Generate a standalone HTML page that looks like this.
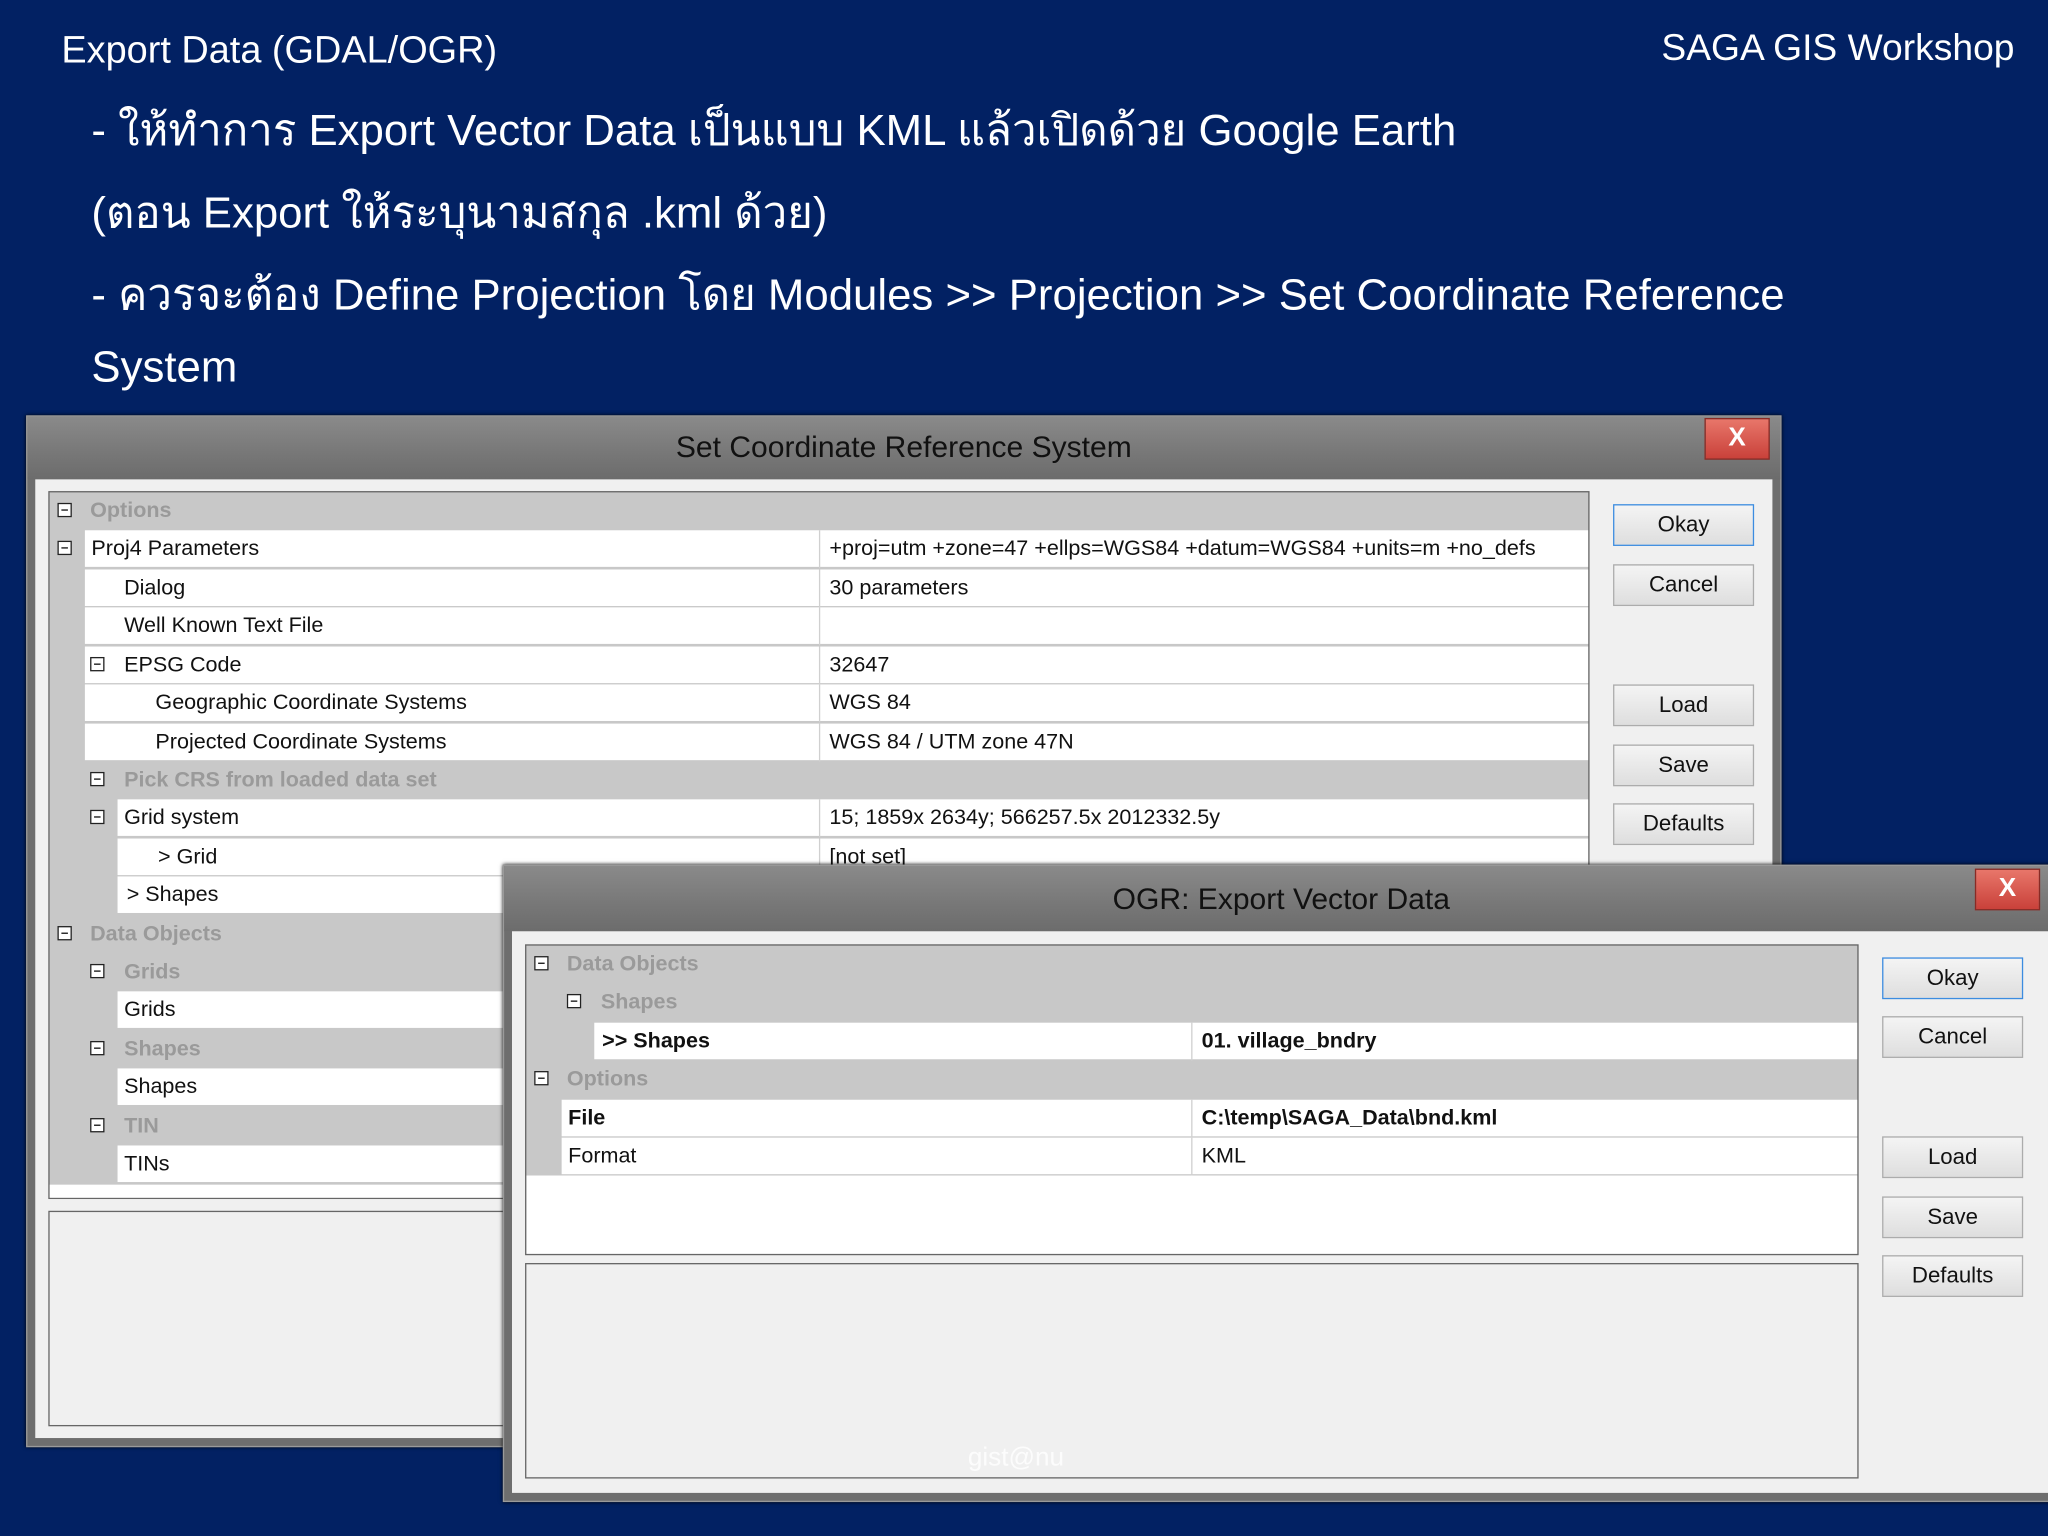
<!DOCTYPE html>
<html><head><meta charset="utf-8">
<style>
html,body{margin:0;padding:0;width:2048px;height:1536px;overflow:hidden;background:#022163;}
#s{position:absolute;left:0;top:0;width:1568px;height:1176px;transform:scale(1.306122);transform-origin:0 0;background:#022163;font-family:"Liberation Sans","Noto Sans CJK SC",sans-serif;}
.a{position:absolute;}
.t{color:#fff;white-space:nowrap;}
.dlg{position:absolute;background:#6e6e6e;border:1px solid #9a9a9a;box-shadow:0 0 3px #000;}
.tb{position:absolute;left:0;right:0;top:0;background:linear-gradient(#8a8a8a,#777 60%,#6c6c6c);color:#111;text-align:center;font-size:23px;}
.body{position:absolute;background:#f0f0f0;}
.x{position:absolute;width:48px;height:30px;background:linear-gradient(#e8766a,#c9413a);border:1px solid #8a2a24;color:#fff;font-weight:bold;font-size:20px;text-align:center;line-height:28px;}
.grid{position:absolute;background:#c8c8c8;border:1px solid #666;overflow:hidden;}
.r{position:absolute;left:0;right:0;height:29px;font-size:16.5px;color:#111;white-space:nowrap;}
.w{position:absolute;top:0;bottom:1px;right:0;background:#fff;}
.sep{position:absolute;top:0;bottom:0;width:1px;background:#d0d0d0;}
.r span{position:absolute;top:5px;}
.h span{color:#9a9a9a;font-weight:bold;}
.m{position:absolute;top:8px;width:11px;height:11px;border:1px solid #222;box-sizing:border-box;background:#fff;}
.m:after{content:"";position:absolute;left:2px;right:2px;top:4px;height:1px;background:#111;}
.btn{position:absolute;width:108px;height:32px;background:linear-gradient(#f4f4f4,#dedede);border:1px solid #acacac;box-sizing:border-box;font-size:17px;text-align:center;line-height:30px;color:#111;}
.btn.def{border:1px solid #3c8ce0;}
.box{position:absolute;background:#f0f0f0;border:1px solid #666;}
</style></head><body><div id="s">

<div class="a t" style="left:47px;top:23px;font-size:29px;">Export Data (GDAL/OGR)</div>
<div class="a t" style="left:1272px;top:21px;font-size:28.5px;">SAGA GIS Workshop</div>
<div class="a t" style="left:70px;top:73px;font-size:33.5px;">- ให้ทำการ Export Vector Data เป็นแบบ KML แล้วเปิดด้วย Google Earth</div>
<div class="a t" style="left:70px;top:136px;font-size:33.5px;">(ตอน Export ให้ระบุนามสกุล .kml ด้วย)</div>
<div class="a t" style="left:70px;top:199px;font-size:33.5px;">- ควรจะต้อง Define Projection โดย Modules &gt;&gt; Projection &gt;&gt; Set Coordinate Reference</div>
<div class="a t" style="left:70px;top:263px;font-size:33.5px;">System</div>

<!-- Dialog 1 -->
<div class="dlg" style="left:20px;top:318px;width:1342px;height:788px;">
 <div class="tb" style="height:48px;line-height:46px;">Set Coordinate Reference System</div>
 <div class="x" style="left:1284px;top:1px;">X</div>
 <div class="body" style="left:6px;top:48px;width:1330px;height:734px;"></div>
 <div class="grid" style="left:16px;top:57px;width:1178px;height:540px;">
  <div class="r h" style="top:0"><div class="m" style="left:6px"></div><span style="left:31px">Options</span></div>
  <div class="r" style="top:29px"><div class="w" style="left:27px"></div><div class="sep" style="left:589px"></div><div class="m" style="left:6px"></div><span style="left:32px">Proj4 Parameters</span><span style="left:597px">+proj=utm +zone=47 +ellps=WGS84 +datum=WGS84 +units=m +no_defs</span></div>
  <div class="r" style="top:59px"><div class="w" style="left:27px"></div><div class="sep" style="left:589px"></div><span style="left:57px">Dialog</span><span style="left:597px">30 parameters</span></div>
  <div class="r" style="top:88px"><div class="w" style="left:27px"></div><div class="sep" style="left:589px"></div><span style="left:57px">Well Known Text File</span></div>
  <div class="r" style="top:118px"><div class="w" style="left:27px"></div><div class="sep" style="left:589px"></div><div class="m" style="left:31px"></div><span style="left:57px">EPSG Code</span><span style="left:597px">32647</span></div>
  <div class="r" style="top:147px"><div class="w" style="left:27px"></div><div class="sep" style="left:589px"></div><span style="left:81px">Geographic Coordinate Systems</span><span style="left:597px">WGS 84</span></div>
  <div class="r" style="top:177px"><div class="w" style="left:27px"></div><div class="sep" style="left:589px"></div><span style="left:81px">Projected Coordinate Systems</span><span style="left:597px">WGS 84 / UTM zone 47N</span></div>
  <div class="r h" style="top:206px"><div class="m" style="left:31px"></div><span style="left:57px">Pick CRS from loaded data set</span></div>
  <div class="r" style="top:235px"><div class="w" style="left:52px"></div><div class="sep" style="left:589px"></div><div class="m" style="left:31px"></div><span style="left:57px">Grid system</span><span style="left:597px">15; 1859x 2634y; 566257.5x 2012332.5y</span></div>
  <div class="r" style="top:265px"><div class="w" style="left:52px"></div><div class="sep" style="left:589px"></div><span style="left:83px">&gt; Grid</span><span style="left:597px">[not set]</span></div>
  <div class="r" style="top:294px"><div class="w" style="left:52px"></div><div class="sep" style="left:589px"></div><span style="left:59px">&gt; Shapes</span></div>
  <div class="r h" style="top:324px"><div class="m" style="left:6px"></div><span style="left:31px">Data Objects</span></div>
  <div class="r h" style="top:353px"><div class="m" style="left:31px"></div><span style="left:57px">Grids</span></div>
  <div class="r" style="top:382px"><div class="w" style="left:52px"></div><span style="left:57px">Grids</span></div>
  <div class="r h" style="top:412px"><div class="m" style="left:31px"></div><span style="left:57px">Shapes</span></div>
  <div class="r" style="top:441px"><div class="w" style="left:52px"></div><span style="left:57px">Shapes</span></div>
  <div class="r h" style="top:471px"><div class="m" style="left:31px"></div><span style="left:57px">TIN</span></div>
  <div class="r" style="top:500px"><div class="w" style="left:52px"></div><span style="left:57px">TINs</span></div>
  <div class="a" style="left:0;right:0;top:530px;height:12px;background:#fff"></div>
 </div>
 <div class="box" style="left:16px;top:608px;width:1178px;height:163px;"></div>
 <div class="btn def" style="left:1214px;top:67px;">Okay</div>
 <div class="btn" style="left:1214px;top:113px;">Cancel</div>
 <div class="btn" style="left:1214px;top:205px;">Load</div>
 <div class="btn" style="left:1214px;top:251px;">Save</div>
 <div class="btn" style="left:1214px;top:296px;">Defaults</div>
</div>

<!-- Dialog 2 -->
<div class="dlg" style="left:385px;top:662px;width:1190px;height:486px;">
 <div class="tb" style="height:50px;line-height:50px;">OGR: Export Vector Data</div>
 <div class="x" style="left:1126px;top:2px;">X</div>
 <div class="body" style="left:6px;top:50px;width:1180px;height:430px;"></div>
 <div class="grid" style="left:16px;top:60px;width:1019px;height:236px;">
  <div class="r h" style="top:0"><div class="m" style="left:6px"></div><span style="left:31px">Data Objects</span></div>
  <div class="r h" style="top:29px"><div class="m" style="left:31px"></div><span style="left:57px">Shapes</span></div>
  <div class="r" style="top:59px"><div class="w" style="left:52px"></div><div class="sep" style="left:509px"></div><span style="left:58px;font-weight:bold">&gt;&gt; Shapes</span><span style="left:517px;font-weight:bold">01. village_bndry</span></div>
  <div class="r h" style="top:88px"><div class="m" style="left:6px"></div><span style="left:31px">Options</span></div>
  <div class="r" style="top:118px"><div class="w" style="left:27px"></div><div class="sep" style="left:509px"></div><span style="left:32px;font-weight:bold">File</span><span style="left:517px;font-weight:bold">C:\temp\SAGA_Data\bnd.kml</span></div>
  <div class="r" style="top:147px"><div class="w" style="left:27px"></div><div class="sep" style="left:509px"></div><span style="left:32px">Format</span><span style="left:517px">KML</span></div>
  <div class="a" style="left:0;right:0;top:176px;bottom:0;background:#fff"></div>
 </div>
 <div class="box" style="left:16px;top:304px;width:1019px;height:163px;"></div>
 <div class="a" style="left:355px;top:442px;color:#fff;font-size:20px;opacity:.8">gist@nu</div>
 <div class="btn def" style="left:1055px;top:70px;">Okay</div>
 <div class="btn" style="left:1055px;top:115px;">Cancel</div>
 <div class="btn" style="left:1055px;top:207px;">Load</div>
 <div class="btn" style="left:1055px;top:253px;">Save</div>
 <div class="btn" style="left:1055px;top:298px;">Defaults</div>
</div>

</div></body></html>
